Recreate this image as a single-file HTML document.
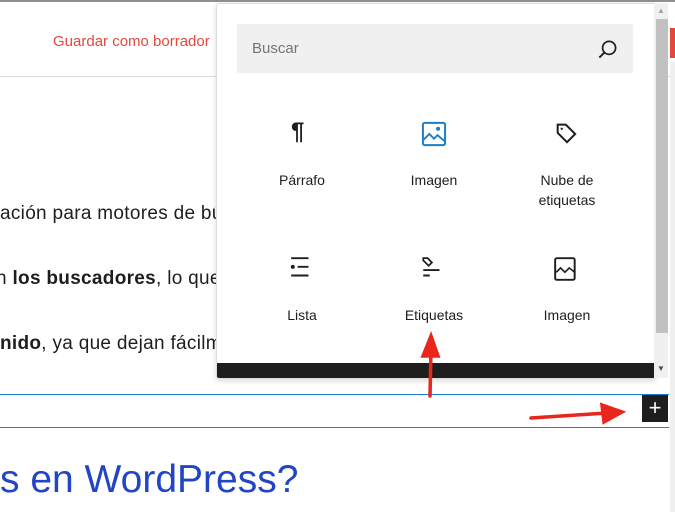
<!DOCTYPE html>
<html><head><meta charset="utf-8"><style>
body{margin:0;width:675px;height:512px;overflow:hidden;background:#fff;font-family:"Liberation Sans",sans-serif;position:relative}
.a{position:absolute}
.t{font-size:19px;color:#1e1e1e;white-space:nowrap;letter-spacing:0.3px}
.lbl{position:absolute;width:120px;text-align:center;font-size:14px;color:#1e1e1e;line-height:20px}
</style></head><body>
<div class="a" style="left:0;top:0;width:675px;height:2px;background:#8a9296"></div>
<div class="a" style="left:0;top:76px;width:670px;height:1px;background:#ddd"></div>
<div class="a" style="left:53px;top:33px;font-size:15px;color:#e2483d">Guardar como borrador</div>
<div class="a" style="left:670px;top:28px;width:5px;height:30px;background:#e2483d"></div>
<div class="a t" style="left:0;top:203px">ación para motores de búsqueda</div>
<div class="a t" style="left:-4px;top:268px">n <b>los buscadores</b>, lo que permite</div>
<div class="a t" style="left:0;top:333px"><b>nido</b>, ya que dejan fácilmente</div>
<div class="a" style="left:0;top:394px;width:669px;height:32px;border-top:1px solid #1a7ec8;border-bottom:1px solid #1a7ec8"></div>
<div class="a" style="left:642px;top:395px;width:26px;height:27px;background:#1e1e1e;color:#fff;font-size:22px;line-height:26px;text-align:center">+</div>
<div class="a" style="left:0;top:458px;font-size:39px;color:#2145c4;white-space:nowrap">s en WordPress?</div>
<div class="a" style="left:670px;top:62px;width:5px;height:450px;background:#f0f0f0"></div>
<div class="a" style="left:216px;top:3px;width:438px;height:374px;background:#fff;border:1px solid #ddd;border-radius:3px;box-shadow:0 2px 6px rgba(0,0,0,.15);overflow:hidden">
 <div class="a" style="left:20px;top:20px;width:396px;height:49px;background:#f0f0f0;border-radius:2px"></div>
 <div class="a" style="left:35px;top:36px;font-size:15px;color:#757575">Buscar</div>
 <svg class="a" style="left:378px;top:33px" width="26" height="26" viewBox="0 0 24 24"><circle cx="13" cy="10" r="6" fill="none" stroke="#1e1e1e" stroke-width="1.6"/><path d="M9 14L4 19" stroke="#1e1e1e" stroke-width="1.8"/></svg>
 <div class="a" style="left:74px;top:114px;font-size:24px;font-weight:bold;color:#1e1e1e">¶</div>
 <svg class="a" style="left:203px;top:116px" width="28" height="28" viewBox="0 0 24 24"><rect x="2.5" y="2.5" width="19" height="19" rx="1.5" fill="none" stroke="#1a7ec8" stroke-width="1.7"/><path d="M3 17l5-5 4 4 3-3 6 5" fill="none" stroke="#1a7ec8" stroke-width="1.6"/><circle cx="15.5" cy="7.5" r="1.7" fill="#1a7ec8"/></svg>
 <svg class="a" style="left:336px;top:116px" width="28" height="28" viewBox="0 0 24 24"><path d="M4 4h7l8 8-7 7-8-8z" fill="none" stroke="#1e1e1e" stroke-width="1.7"/><circle cx="7.5" cy="7.5" r="1" fill="#1e1e1e"/></svg>
 <div class="lbl" style="left:25px;top:166px">Párrafo</div>
 <div class="lbl" style="left:157px;top:166px">Imagen</div>
 <div class="lbl" style="left:290px;top:166px">Nube de<br>etiquetas</div>
 <svg class="a" style="left:72px;top:252px" width="26" height="26" viewBox="0 0 24 24"><path d="M2 2h16M8 10h10M2 18h16" stroke="#1e1e1e" stroke-width="1.8"/><circle cx="3.5" cy="10" r="1.8" fill="#1e1e1e"/></svg>
 <svg class="a" style="left:203px;top:252px" width="26" height="26" viewBox="0 0 24 24"><path d="M3 2h4l4 4-3 3-5-5z" fill="none" stroke="#1e1e1e" stroke-width="1.6"/><path d="M3 13h15M3 18h6" stroke="#1e1e1e" stroke-width="1.8"/></svg>
 <svg class="a" style="left:336px;top:252px" width="26" height="26" viewBox="0 0 24 24"><rect x="2" y="2" width="18" height="20" rx="1.5" fill="none" stroke="#1e1e1e" stroke-width="1.8"/><path d="M3 15l4-4 4 4 4-4 5 4" fill="none" stroke="#1e1e1e" stroke-width="1.5"/></svg>
 <div class="lbl" style="left:25px;top:301px">Lista</div>
 <div class="lbl" style="left:157px;top:301px">Etiquetas</div>
 <div class="lbl" style="left:290px;top:301px">Imagen</div>
 <div class="a" style="left:0;top:359px;width:438px;height:16px;background:#1e1e1e"></div>
</div>
<div class="a" style="left:654px;top:3px;width:14px;height:375px;background:#f0f0f0"></div>
<div class="a" style="left:656px;top:19px;width:12px;height:314px;background:#c1c1c1"></div>
<div class="a" style="left:657px;top:6px;font-size:8px;color:#a3a3a3">▲</div>
<div class="a" style="left:657px;top:364px;font-size:8px;color:#505050">▼</div>
<svg class="a" style="left:0;top:0" width="675" height="512"><g stroke="#e8261c" stroke-width="3.5" fill="#e8261c" stroke-linecap="round"><path d="M430 396L431 350" fill="none"/><path d="M423 356L431 336L438 356z"/><path d="M531 418L607 413" fill="none"/><path d="M602 405L622 412L604 422z"/></g></svg>
</body></html>
